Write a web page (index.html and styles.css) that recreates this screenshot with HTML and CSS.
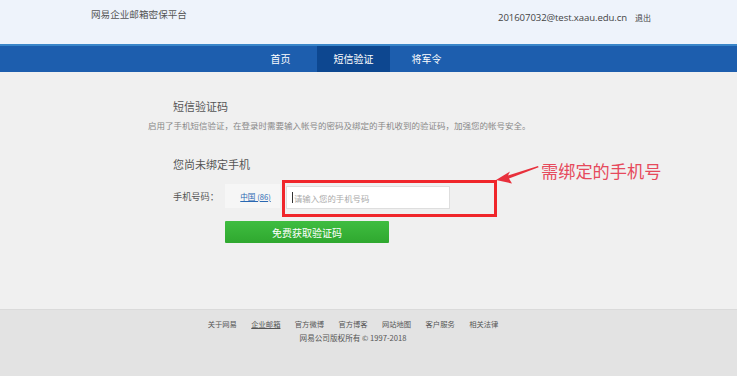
FILE: index.html
```html
<!DOCTYPE html>
<html lang="zh-CN">
<head>
<meta charset="utf-8">
<title>网易企业邮箱密保平台</title>
<link rel="stylesheet" href="styles.css">
</head>
<body>
<header class="header">
  <div class="brand">网易企业邮箱密保平台</div>
  <div class="user">
    <span class="email">201607032@test.xaau.edu.cn</span>
    <a class="logout">退出</a>
  </div>
</header>
<nav class="nav">
  <div class="nav-inner">
    <a class="tab">首页</a>
    <a class="tab active">短信验证</a>
    <a class="tab">将军令</a>
  </div>
</nav>
<main class="main">
  <div class="main-inner">
    <h2 class="title">短信验证码</h2>
    <p class="desc">启用了手机短信验证，在登录时需要输入帐号的密码及绑定的手机收到的验证码，加强您的帐号安全。</p>
    <h3 class="subtitle">您尚未绑定手机</h3>
    <div class="row">
      <label class="label">手机号码：</label>
      <div class="country"><a class="country-link">中国 (86)</a></div>
      <div class="input"><span class="caret"></span><span class="placeholder">请输入您的手机号码</span></div>
    </div>
    <button class="btn">免费获取验证码</button>
  </div>
  <div class="mark-box"></div>
  <svg class="arrow" width="50" height="24" viewBox="0 0 50 24">
    <polygon points="1,17 15,8.5 13,12.5 43,3 43.6,4.3 14,15.5 17,20.5" fill="#e8303c"/>
  </svg>
  <div class="note">需绑定的手机号</div>
</main>
<footer class="footer">
  <div class="links">
    <a>关于网易</a><a class="u">企业邮箱</a><a>官方微博</a><a>官方博客</a><a>网站地图</a><a>客户服务</a><a>相关法律</a>
  </div>
  <div class="copy">网易公司版权所有 © 1997-2018</div>
</footer>
</body>
</html>
```
FILE: styles.css
```css
* { box-sizing: border-box; margin: 0; padding: 0; }
body {
  margin: 0;
  width: 737px;
  height: 376px;
  overflow: hidden;
  font-family: "Noto Sans CJK SC", "Microsoft YaHei", sans-serif;
  background: #f0f0f0;
}
a { text-decoration: none; color: inherit; }

.header {
  height: 44px;
  background: #eef3fb;
  display: flex;
  justify-content: space-between;
  padding: 0 86px 0 91px;
  position: relative;
}
.brand {
  font-size: 9.6px;
  line-height: 14px;
  margin-top: 7px;
  color: #555;
}
.user {
  margin-top: 12px;
  font-size: 8px;
  line-height: 12px;
  color: #444;
  display: flex;
  align-items: baseline;
  gap: 8px;
}
.email { font-family: "Open Sans", "Noto Sans CJK SC", sans-serif; font-size: 9.6px; letter-spacing: -0.1px; }

.nav {
  height: 28px;
  background: #1d5eae;
  border-top: 2px solid #3a86c9;
}
.nav-inner {
  display: flex;
  padding-left: 244px;
  height: 26px;
}
.tab {
  width: 73px;
  height: 26px;
  line-height: 26px;
  text-align: center;
  color: #fff;
  font-size: 10px;
}
.tab.active { background: #0d4790; }

.main {
  height: 237px;
  background: #f0f0f0;
  position: relative;
}
.main-inner {
  padding: 27px 0 0 148px;
}
.title {
  margin-left: 25px;
  font-size: 11px;
  line-height: 14px;
  font-weight: normal;
  color: #555;
}
.desc {
  margin-top: 6px;
  font-size: 8.5px;
  line-height: 12px;
  color: #888;
  white-space: nowrap;
}
.subtitle {
  margin-top: 26px;
  margin-left: 25px;
  font-size: 11px;
  line-height: 14px;
  font-weight: normal;
  color: #555;
}
.row {
  margin-top: 13px;
  margin-left: 25px;
  display: flex;
  align-items: flex-start;
}
.label {
  width: 52px;
  font-size: 9.2px;
  line-height: 24px;
  color: #555;
}
.country {
  width: 55px;
  height: 24px;
  background: #f6f6f6;
  display: flex;
  align-items: center;
  justify-content: center;
  padding-left: 6px;
}
.country-link {
  font-size: 7.6px;
  color: #2a68b2;
  text-decoration: underline;
}
.input {
  margin-left: 6px;
  margin-top: 2px;
  width: 164px;
  height: 23px;
  background: #fff;
  border: 1px solid #dedede;
  display: flex;
  align-items: center;
  padding-left: 5px;
}
.caret {
  width: 1px;
  height: 11px;
  background: #333;
  margin-right: 1px;
}
.placeholder {
  font-size: 8.4px;
  color: #aaa;
}
.btn {
  display: block;
  margin-top: 12px;
  margin-left: 77px;
  width: 164px;
  height: 22px;
  border: none;
  border-radius: 1px;
  background: linear-gradient(#3fbd40, #2fa82f);
  color: #fff;
  font-family: "Noto Sans CJK SC", sans-serif;
  font-size: 10px;
}

.mark-box {
  position: absolute;
  left: 282px;
  top: 108px;
  width: 215px;
  height: 37px;
  border: 3px solid #f0262b;
}
.arrow {
  position: absolute;
  left: 495px;
  top: 91px;
}
.note {
  position: absolute;
  left: 541px;
  top: 88px;
  font-size: 17.2px;
  line-height: 22px;
  color: #e64a5c;
  white-space: nowrap;
}

.footer {
  height: 67px;
  background: #e3e3e3;
  border-top: 1px solid #dadada;
  padding-top: 8px;
}
.links {
  display: flex;
  justify-content: center;
  gap: 14.4px;
  width: 706px;
  font-size: 7.3px;
  line-height: 12px;
  color: #555;
}
.links .u { text-decoration: underline; }
.copy {
  width: 706px;
  margin-top: 2px;
  text-align: center;
  font-size: 7.6px;
  line-height: 12px;
  color: #555;
}
```
